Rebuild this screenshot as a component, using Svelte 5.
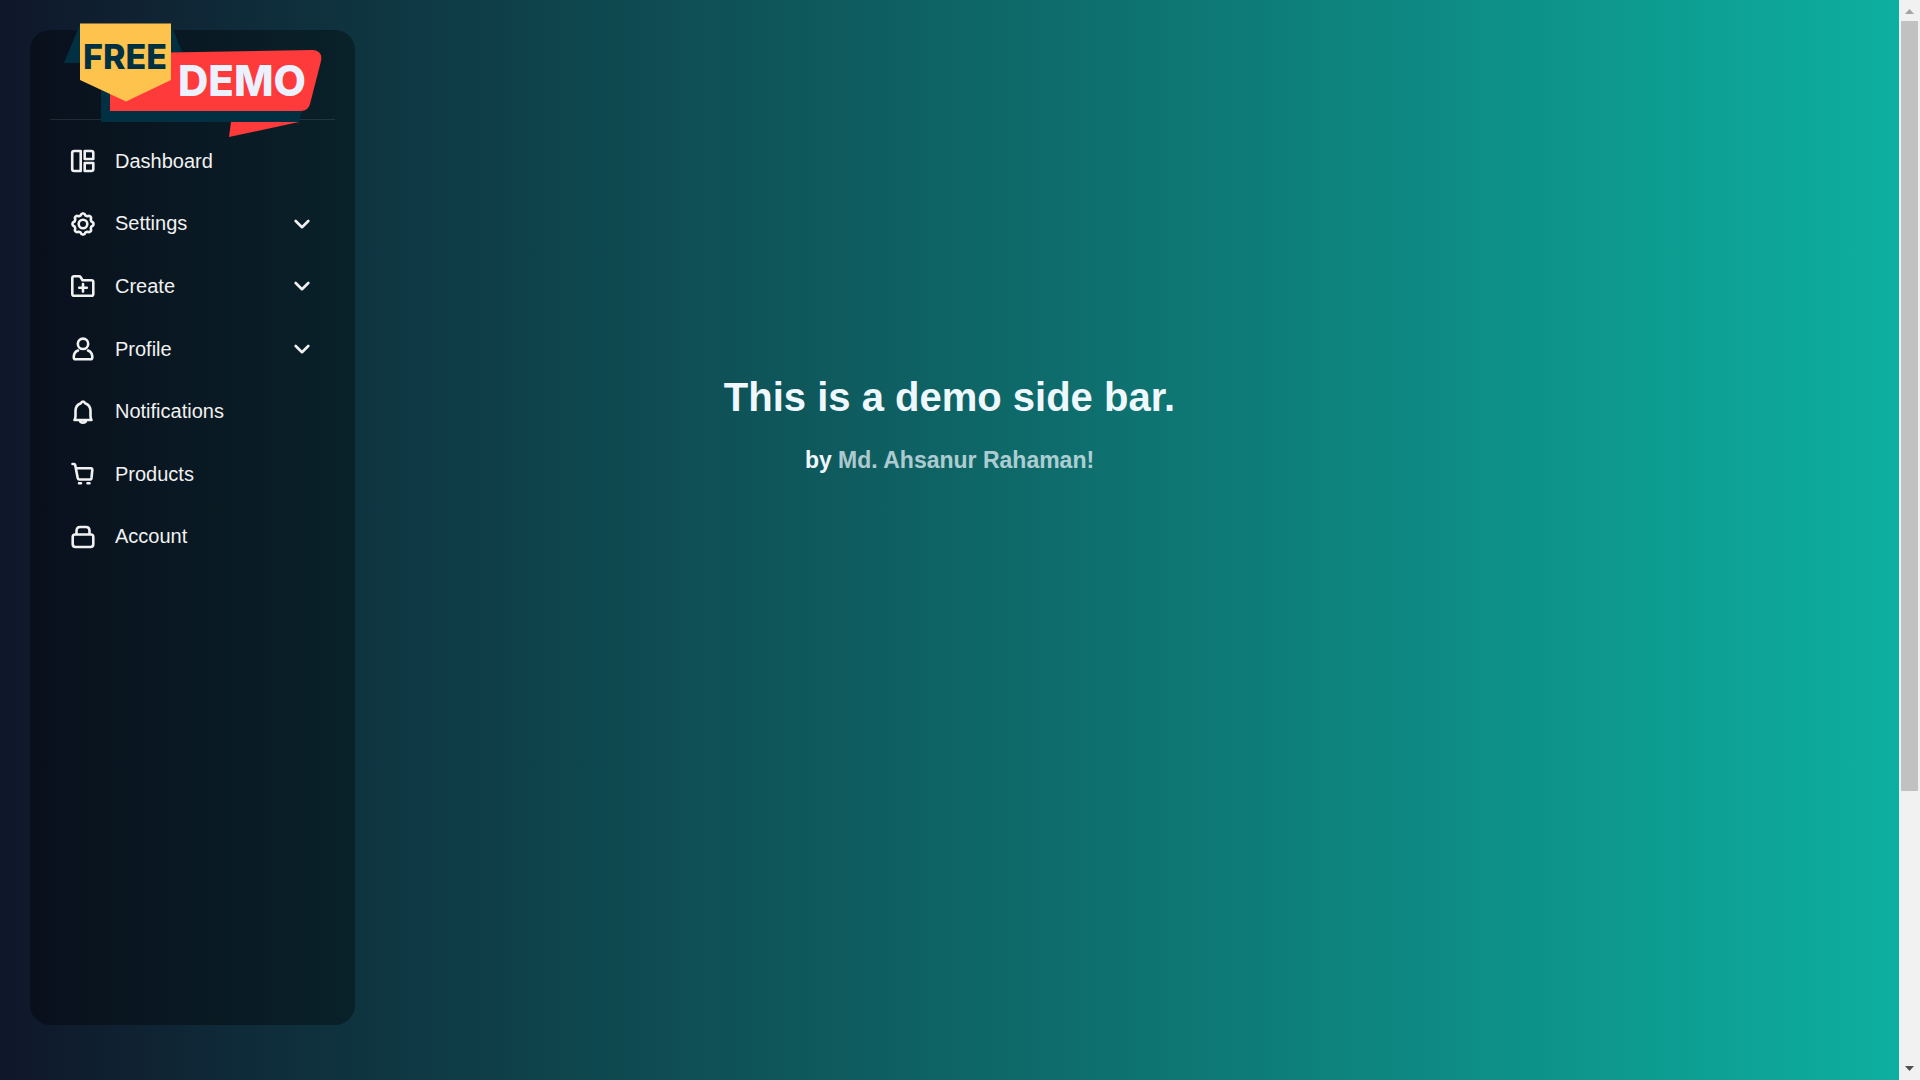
<script lang="ts">
  const items = [
    { label: 'Dashboard', icon: 'dashboard', more: false },
    { label: 'Settings', icon: 'settings', more: true },
    { label: 'Create', icon: 'create', more: true },
    { label: 'Profile', icon: 'profile', more: true },
    { label: 'Notifications', icon: 'bell', more: false },
    { label: 'Products', icon: 'cart', more: false },
    { label: 'Account', icon: 'lock', more: false }
  ];

  // Eight-lobed gear outline around the centre of a 26 unit box
  const gear = Array.from({ length: 97 }, (_, i) => {
    const a = (i / 96) * Math.PI * 2;
    const r = 9.6 + 0.95 * Math.tanh(1.6 * Math.cos(8 * a));
    return `${i ? 'L' : 'M'}${(13 + r * Math.cos(a)).toFixed(2)} ${(13 + r * Math.sin(a)).toFixed(2)}`;
  }).join('') + 'Z';
</script>

<div class="page">
  <div class="view">
    <aside class="sidebar">
      <header>
        <svg class="logo" viewBox="60 20 265 120" role="img" aria-label="Free demo">
          <path fill="#003042" d="M80 24L64 63H80ZM171 24L183 54H171ZM101 84V122H299L303 108H112V84Z" />
          <path fill="#ff3a3a" d="M110 84L140 53L313 50Q323 51 321 61L310 104Q308 111 301 111H110Z" />
          <path fill="#ff3a3a" d="M231 122H299L229 137Z" />
          <path fill="#fdc34d" d="M80 23.500H171V80L126 101.500L80 80Z" />
          <text class="free" x="83" y="69">FREE</text>
          <text class="demo" x="178" y="96">DEMO</text>
        </svg>
      </header>
      <nav>
        {#each items as item}
          <button type="button">
            <svg class="icon" viewBox="0 0 26 26" aria-hidden="true">
              {#if item.icon === 'dashboard'}
                <path d="M4.200 3H10.700V23H4.200Q2.200 23 2.200 21V5Q2.200 3 4.200 3ZM14.700 3H21.300Q23.300 3 23.300 5V11H14.700ZM14.700 15H23.300V21Q23.300 23 21.300 23H14.700Z" />
              {:else if item.icon === 'settings'}
                <path d={gear} />
                <circle cx="13" cy="13" r="4.300" />
              {:else if item.icon === 'create'}
                <path d="M4.200 3.200H9Q10 3.200 10.500 4L12.500 7.200H21.500Q23.300 7.200 23.300 9V21Q23.300 22.800 21.500 22.800H4.200Q2.300 22.800 2.300 21V5Q2.300 3.200 4.200 3.200ZM13 11V18.600M9.200 14.800H16.800" />
              {:else if item.icon === 'profile'}
                <circle cx="13" cy="7.800" r="5.200" />
                <path d="M8 14.500Q4 16 3.800 20.500V21.500Q3.800 23.300 5.500 23.300H20.500Q22.300 23.300 22.300 21.500V20.500Q22 16 18 14.500" />
              {:else if item.icon === 'bell'}
                <path d="M4.500 21Q5.500 19.500 5.500 17V12Q5.500 6 11 4.200Q11.500 2.500 13 2.500Q14.500 2.500 15 4.200Q20.500 6 20.500 12V17Q20.500 19.500 21.500 21ZM10 22Q10.500 23.700 13 23.700Q15.500 23.700 16 22" />
              {:else if item.icon === 'cart'}
                <path d="M2.500 3H4Q5 3 5.200 4L7.700 17Q8 18.500 9.500 18.500H19.700Q21.300 18.500 21.500 17L22.300 9Q22.300 7.200 21 7.200H6.500M9 22.200H11M17.500 22.200H19.500" />
              {:else}
                <path d="M5 10.500H21Q23.300 10.500 23.300 13V20Q23.300 23 20.500 23H5.500Q2.700 23 2.700 20V13Q2.700 10.500 5 10.500ZM6.500 10.500V7Q6.500 3 10 3H16Q19.500 3 19.500 7V10.500" />
              {/if}
            </svg>
            <span>{item.label}</span>
            {#if item.more}
              <svg class="chevron" viewBox="0 0 16 10" aria-hidden="true"><path d="M1.700 2L8 8.200L14.300 2" /></svg>
            {/if}
          </button>
        {/each}
      </nav>
    </aside>
    <main>
      <h1>This is a demo side bar.</h1>
      <h2>by <span>Md. Ahsanur Rahaman!</span></h2>
    </main>
  </div>
  <div class="scrollbar" aria-hidden="true">
    <svg viewBox="0 0 21 21"><path fill="#a3a3a3" d="M6 14L10.500 9L15 14Z" /></svg>
    <div class="track"><div class="thumb"></div></div>
    <svg viewBox="0 0 21 21"><path fill="#505050" d="M6 7L10.500 12L15 7Z" /></svg>
  </div>
</div>

<style>
  :global(body) {
    margin: 0;
    font-family: "Liberation Sans", Arial, sans-serif;
  }
  .page {
    display: flex;
    height: 100vh;
    overflow: hidden;
  }
  .view {
    position: relative;
    flex: 1;
    background: linear-gradient(90deg, #0f172a 0%, #0e6465 50%, #0dafa0 100%);
  }
  .sidebar {
    position: absolute;
    top: 30px;
    bottom: 55px;
    left: 30px;
    box-sizing: border-box;
    width: 325px;
    padding: 0 20px;
    border-radius: 20px;
    background: rgba(0, 0, 0, 0.35);
  }
  header {
    position: relative;
    box-sizing: border-box;
    height: 90px;
    border-bottom: 1px solid rgba(255, 255, 255, 0.1);
  }
  .logo {
    position: absolute;
    top: -10px;
    left: 10px;
    width: 265px;
    height: 120px;
  }
  .logo text {
    font-family: Inter, sans-serif;
    font-weight: 800;
  }
  .logo .free {
    fill: #003042;
    font-size: 34px;
  }
  .logo .demo {
    fill: #ebf1ff;
    font-size: 42px;
  }
  nav {
    display: flex;
    flex-direction: column;
    height: 438px;
    padding-top: 10px;
  }
  button {
    display: flex;
    flex: 1;
    align-items: center;
    gap: 19px;
    width: 100%;
    padding: 0 25px 0 20px;
    border: 0;
    background: none;
    color: #f1f1f1;
    font-family: inherit;
    font-size: 20px;
    text-align: left;
    cursor: pointer;
  }
  button span {
    flex: 1;
  }
  .icon {
    width: 26px;
    height: 26px;
  }
  .icon,
  .chevron {
    fill: none;
    stroke: #f1f1f1;
    stroke-width: 2.6;
    stroke-linecap: round;
    stroke-linejoin: round;
  }
  .chevron {
    width: 16px;
    height: 10px;
  }
  main {
    padding-top: 374px;
    color: aliceblue;
    text-align: center;
  }
  h1 {
    margin: 0;
    font-size: 40px;
    line-height: 46px;
  }
  h2 {
    margin: 27px 0 0;
    font-size: 23px;
    line-height: 26px;
  }
  h2 span {
    opacity: 0.7;
  }
  .scrollbar {
    display: flex;
    flex-direction: column;
    width: 21px;
    background: #f1f1f1;
  }
  .scrollbar svg {
    width: 21px;
    height: 21px;
  }
  .track {
    flex: 1;
    padding: 0 2px;
  }
  .thumb {
    height: 74.2%;
    background: #c1c1c1;
  }
</style>
